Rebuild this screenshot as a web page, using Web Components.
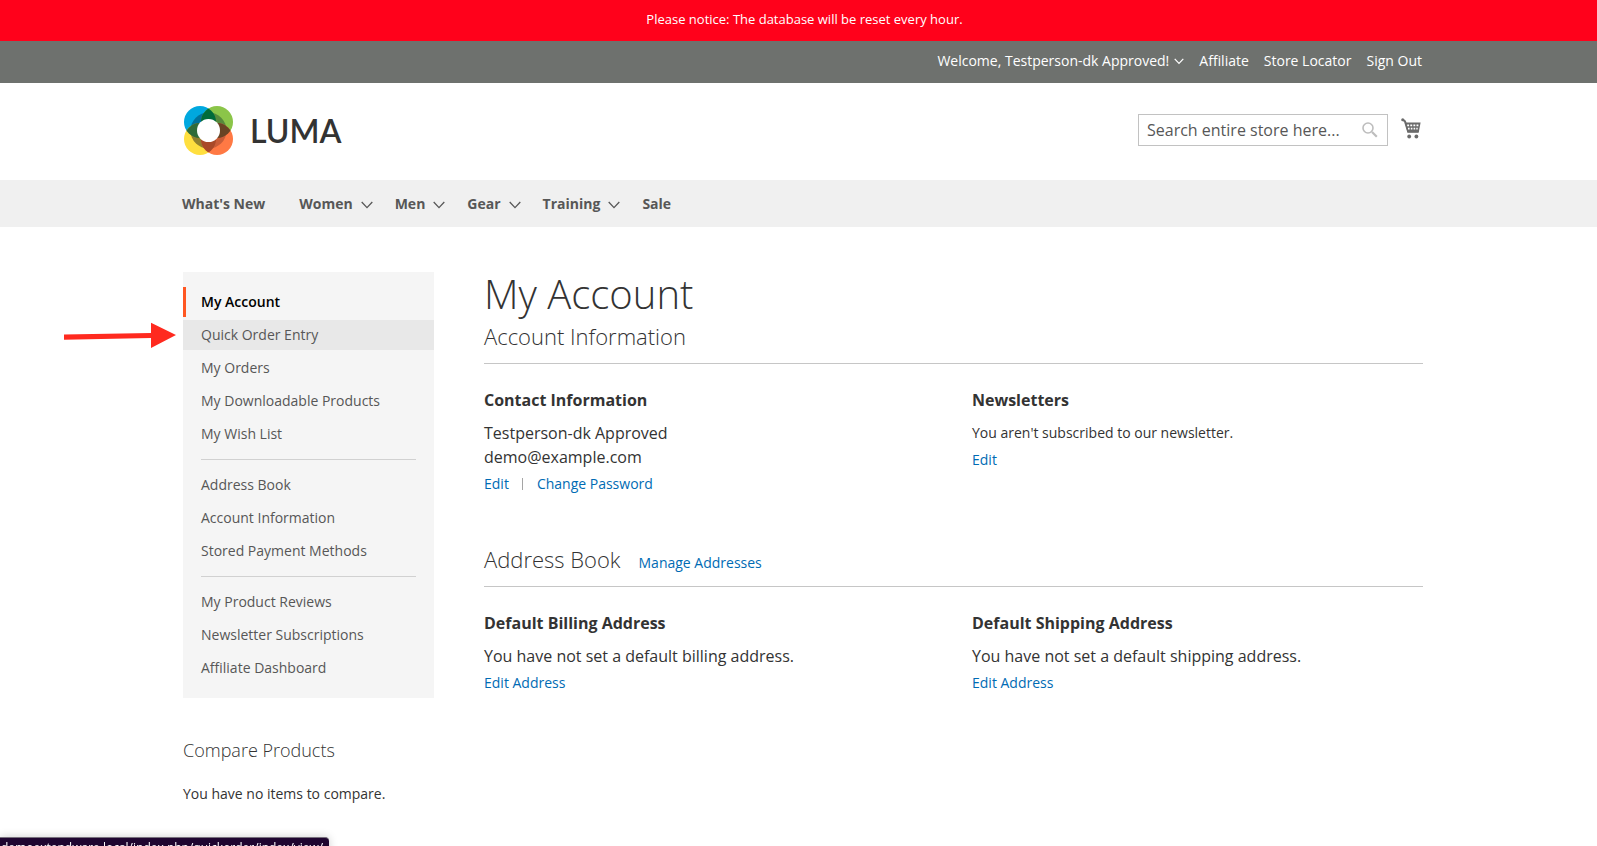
<!DOCTYPE html>
<html lang="en">
<head>
<meta charset="utf-8">
<meta name="viewport" content="width=device-width, initial-scale=1">
<title>My Account</title>
<style>
  body {
    margin: 0;
    background: #fff;
    color: #333;
    font-family: "Open Sans", "Noto Sans", sans-serif;
    font-size: 14px;
    line-height: 20px;
    --container: 1249px;
    --indent: 9px;
    --link: #006bb4;
    --rule: #c6c6c6;
  }
</style>
</head>
<body>
<store-page>
  <store-banner slot="top">Please notice: The database will be reset every hour.</store-banner>
  <store-panel slot="top" customer="Testperson-dk Approved"></store-panel>
  <store-header slot="top"></store-header>
  <store-nav slot="top"></store-nav>

  <account-nav slot="sidebar"></account-nav>
  <compare-box slot="sidebar"></compare-box>

  <page-title>My Account</page-title>
  <account-block heading="Account Information">
    <info-box heading="Contact Information">
      Testperson-dk Approved<br>demo@example.com
      <action-link slot="actions">Edit</action-link>
      <action-link slot="actions" divided>Change Password</action-link>
    </info-box>
    <info-box heading="Newsletters" small>
      You aren't subscribed to our newsletter.
      <action-link slot="actions">Edit</action-link>
    </info-box>
  </account-block>
  <account-block heading="Address Book">
    <action-link slot="title-action">Manage Addresses</action-link>
    <info-box heading="Default Billing Address">
      You have not set a default billing address.
      <action-link slot="actions">Edit Address</action-link>
    </info-box>
    <info-box heading="Default Shipping Address">
      You have not set a default shipping address.
      <action-link slot="actions">Edit Address</action-link>
    </info-box>
  </account-block>
</store-page>
<status-bubble>demoextendware.local/index.php/quickorder/index/view/</status-bubble>

<script>
class StorePage extends HTMLElement {
  constructor() {
    super();
    this.attachShadow({ mode: 'open' });
    this.shadowRoot.innerHTML = `
      <style>
        :host { display: block; }
        .columns {
          box-sizing: border-box;
          display: grid;
          grid-template-columns: 251px minmax(0, 1fr);
          gap: 50px;
          max-width: var(--container);
          margin: 0 auto;
          padding: 45px 0 0 var(--indent);
        }
      </style>
      <header><slot name="top"></slot></header>
      <div class="columns">
        <aside><slot name="sidebar"></slot></aside>
        <main><slot></slot></main>
      </div>
    `;
  }
}

class StoreBanner extends HTMLElement {
  constructor() {
    super();
    this.attachShadow({ mode: 'open' });
    this.shadowRoot.innerHTML = `
      <style>
        :host {
          display: block;
          padding: 9px 0 12px 12px;
          background: #ff011b;
          color: #fff;
          font-size: 13px;
          font-weight: 500;
          text-align: center;
        }
      </style>
      <slot></slot>
    `;
  }
}

class StorePanel extends HTMLElement {
  constructor() {
    super();
    this.attachShadow({ mode: 'open' });
  }

  connectedCallback() {
    this.shadowRoot.innerHTML = `
      <style>
        :host { display: block; background: #6e716e; color: #fff; }
        ul {
          box-sizing: border-box;
          display: flex;
          justify-content: flex-end;
          gap: 15px;
          max-width: var(--container);
          margin: 0 auto;
          padding: 10px 1px 12px 0;
          list-style: none;
        }
        a { color: inherit; text-decoration: none; }
        button {
          display: flex;
          align-items: center;
          gap: 5px;
          padding: 0;
          border: 0;
          background: none;
          color: inherit;
          font: inherit;
          cursor: pointer;
        }
        svg { display: block; }
      </style>
      <ul>
        <li>
          <button type="button">Welcome, ${this.getAttribute('customer')}!
            <svg width="10" height="8" viewBox="0 0 10 8" fill="none" stroke="#fff" stroke-width="1.2"><path d="M.7 1.8 5 6.4l4.3-4.6"/></svg>
          </button>
        </li>
        <li><a href="#">Affiliate</a></li>
        <li><a href="#">Store Locator</a></li>
        <li><a href="#">Sign Out</a></li>
      </ul>
    `;
  }
}

class StoreLogo extends HTMLElement {
  constructor() {
    super();
    this.attachShadow({ mode: 'open' });
    this.shadowRoot.innerHTML = `
      <style>
        :host { display: block; }
        a {
          display: flex;
          align-items: center;
          gap: 17px;
          color: #333;
          font-family: Lato, sans-serif;
          font-size: 32px;
          font-weight: 600;
          line-height: 48px;
          text-decoration: none;
        }
        svg { display: block; }
      </style>
      <a href="#">
        <svg width="49" height="49" viewBox="0 0 49 49" aria-hidden="true">
          <defs>
            <clipPath id="ring"><circle cx="24.5" cy="24.5" r="18"/></clipPath>
            <clipPath id="tl"><circle cx="16" cy="16" r="16"/></clipPath>
            <clipPath id="br"><circle cx="33" cy="33" r="16"/></clipPath>
          </defs>
          <circle cx="16" cy="16" r="16" fill="#00a8df"/>
          <circle cx="33" cy="16" r="16" fill="#8bc549"/>
          <circle cx="16" cy="33" r="16" fill="#ffdf3f"/>
          <circle cx="33" cy="33" r="16" fill="#ff7944"/>
          <g clip-path="url(#ring)">
            <circle cx="16" cy="16" r="16" fill="#00729b"/>
            <circle cx="33" cy="16" r="16" fill="#578a3c"/>
            <circle cx="16" cy="33" r="16" fill="#91812f"/>
            <circle cx="33" cy="33" r="16" fill="#c95d38"/>
          </g>
          <g clip-path="url(#tl)">
            <circle cx="16" cy="33" r="16" fill="#2f6b39"/>
            <circle cx="33" cy="16" r="16" fill="#006b3a"/>
          </g>
          <g clip-path="url(#br)">
            <circle cx="16" cy="33" r="16" fill="#a94a29"/>
            <circle cx="33" cy="16" r="16" fill="#694424"/>
          </g>
          <circle cx="24.5" cy="24.5" r="11.5" fill="#fff"/>
        </svg>
        <span>LUMA</span>
      </a>
    `;
  }
}

class StoreHeader extends HTMLElement {
  constructor() {
    super();
    this.attachShadow({ mode: 'open' });
    this.shadowRoot.innerHTML = `
      <style>
        :host { display: block; }
        .bar {
          box-sizing: border-box;
          display: flex;
          justify-content: space-between;
          align-items: center;
          max-width: var(--container);
          margin: 0 auto;
          padding: 23px 2px 25px 10px;
        }
        .tools { display: flex; align-items: center; gap: 13px; margin-bottom: 2px; }
        form {
          box-sizing: border-box;
          display: flex;
          align-items: center;
          width: 250px;
          height: 32px;
          padding: 0 9px 0 8px;
          border: 1px solid #c2c2c2;
        }
        input {
          flex: 1;
          min-width: 0;
          padding: 0;
          border: 0;
          outline: 0;
          background: none;
          color: #333;
          font: inherit;
          font-size: 16px;
        }
        input::placeholder { color: #575757; opacity: 1; }
        button { padding: 0; border: 0; background: none; cursor: pointer; }
        svg { display: block; }
        .cart { margin-bottom: 3px; }
      </style>
      <div class="bar">
        <store-logo></store-logo>
        <div class="tools">
          <form>
            <input type="text" placeholder="Search entire store here..." aria-label="Search">
            <button type="button" aria-label="Search">
              <svg width="16" height="16" viewBox="0 0 16 16" fill="none" stroke="#bdbdbd"><circle cx="6" cy="6" r="5" stroke-width="1.6"/><path d="m10 10 4.8 4.8" stroke-width="2.2"/></svg>
            </button>
          </form>
          <a class="cart" href="#" aria-label="My Cart">
            <svg width="20" height="21" viewBox="0 0 20 21">
              <circle cx="1.7" cy="1.8" r="1.5" fill="#6b6b6b"/>
              <path d="M1.8 1.6 4 3.4 7.2 13.8h10.4" fill="none" stroke="#6b6b6b" stroke-width="2"/>
              <path d="M3.8 4.6H19.6l-1.8 9.6H6.6z" fill="#6b6b6b"/>
              <path d="M6.2 7.4h1.9M9.3 7.4h1.9M12.4 7.4h1.9M15.5 7.4h1.9M7 10.6h1.6M9.8 10.6h1.6M12.6 10.6h1.6M15.3 10.6h1.4" stroke="#fff" stroke-width="1.7"/>
              <circle cx="8.2" cy="18.5" r="1.9" fill="#6b6b6b"/>
              <circle cx="15.4" cy="18.5" r="1.9" fill="#6b6b6b"/>
            </svg>
          </a>
        </div>
      </div>
    `;
  }
}

class StoreNav extends HTMLElement {
  constructor() {
    super();
    this.attachShadow({ mode: 'open' });
    this._items = [
      { label: "What's New" },
      { label: 'Women', menu: true },
      { label: 'Men', menu: true },
      { label: 'Gear', menu: true },
      { label: 'Training', menu: true },
      { label: 'Sale' },
    ];
  }

  connectedCallback() {
    const chevron = `<svg width="12" height="8" viewBox="0 0 12 8" fill="none" stroke="#575757" stroke-width="1.3"><path d="M.7 1 6 6.6 11.3 1"/></svg>`;

    this.shadowRoot.innerHTML = `
      <style>
        :host { display: block; background: #f0f0f0; }
        ul {
          box-sizing: border-box;
          display: flex;
          max-width: var(--container);
          margin: 0 auto;
          padding: 14px 0 13px 8px;
          list-style: none;
        }
        a {
          display: flex;
          align-items: center;
          gap: 8px;
          color: #575757;
          font-weight: 700;
          text-decoration: none;
        }
        li { margin-right: 34px; }
        li.menu { margin-right: 22px; }
        svg { display: block; margin-top: 2px; }
      </style>
      <nav>
        <ul>
          ${this._items.map((item) => `<li class="${item.menu ? 'menu' : ''}"><a href="#">${item.label}${item.menu ? chevron : ''}</a></li>`).join('')}
        </ul>
      </nav>
    `;
  }
}

class AccountNav extends HTMLElement {
  constructor() {
    super();
    this.attachShadow({ mode: 'open' });
    this._groups = [
      ['My Account', 'Quick Order Entry', 'My Orders', 'My Downloadable Products', 'My Wish List'],
      ['Address Book', 'Account Information', 'Stored Payment Methods'],
      ['My Product Reviews', 'Newsletter Subscriptions', 'Affiliate Dashboard'],
    ];
  }

  connectedCallback() {
    const states = { 'My Account': 'current', 'Quick Order Entry': 'hover' };

    this.shadowRoot.innerHTML = `
      <style>
        :host { display: block; background: #f5f5f5; }
        ul {
          display: flex;
          flex-direction: column;
          gap: 3px;
          margin: 0;
          padding: 15px 0;
          list-style: none;
        }
        li { position: relative; }
        a {
          display: block;
          padding: 5px 18px;
          color: #575757;
          text-decoration: none;
        }
        .current a {
          padding-left: 15px;
          border-left: 3px solid #ff5722;
          color: #000;
          font-weight: 600;
        }
        .hover a { background: #e8e8e8; }
        .divider { height: 1px; margin: 7px 18px; background: #d1d1d1; }
        /* pointer drawn in the page margin, over the empty area */
        .pointer { position: absolute; right: 100%; top: 2px; margin-right: 7px; }
      </style>
      <nav>
        <ul>
          ${this._groups.map((group) => group.map((label) => `
            <li class="${states[label] || ''}">
              <a href="#">${label}</a>
              ${states[label] === 'hover' ? '<svg class="pointer" width="112" height="27" viewBox="0 0 112 27" fill="#ff2a1f" aria-hidden="true"><path d="M0 12.5 87 11V.7L112 13 87 26V16L0 17.7z"/></svg>' : ''}
            </li>`).join('')).join('<li class="divider"></li>')}
        </ul>
      </nav>
    `;
  }
}

class CompareBox extends HTMLElement {
  constructor() {
    super();
    this.attachShadow({ mode: 'open' });
    this.shadowRoot.innerHTML = `
      <style>
        :host { display: block; margin-top: 42px; }
        h2 { margin: 0 0 24px; font-size: 18px; font-weight: 300; line-height: 20px; }
        p { margin: 0; }
      </style>
      <h2>Compare Products</h2>
      <p>You have no items to compare.</p>
    `;
  }
}

class PageTitle extends HTMLElement {
  constructor() {
    super();
    this.attachShadow({ mode: 'open' });
    this.shadowRoot.innerHTML = `
      <style>
        :host { display: block; margin-bottom: 8px; }
        h1 { margin: 0; font-size: 40px; font-weight: 300; line-height: 44px; }
      </style>
      <h1><slot></slot></h1>
    `;
  }
}

class AccountBlock extends HTMLElement {
  constructor() {
    super();
    this.attachShadow({ mode: 'open' });
  }

  connectedCallback() {
    this.shadowRoot.innerHTML = `
      <style>
        :host { display: block; margin-bottom: 53px; }
        .title {
          display: flex;
          align-items: baseline;
          gap: 18px;
          height: 24px;
          margin-bottom: 27px;
          padding-bottom: 15px;
          border-bottom: 1px solid var(--rule);
        }
        h2 { margin: 0; font-size: 22px; font-weight: 300; line-height: 24px; }
        .boxes { display: grid; grid-template-columns: 1fr 1fr; gap: 37px; }
      </style>
      <section>
        <div class="title">
          <h2>${this.getAttribute('heading')}</h2>
          <slot name="title-action"></slot>
        </div>
        <div class="boxes"><slot></slot></div>
      </section>
    `;
  }
}

class InfoBox extends HTMLElement {
  constructor() {
    super();
    this.attachShadow({ mode: 'open' });
  }

  connectedCallback() {
    this.shadowRoot.innerHTML = `
      <style>
        :host { display: block; }
        h3 { margin: 0 0 12px; font-size: 16px; font-weight: 700; line-height: 18px; }
        p { margin: 0 0 5px; font-size: 16px; line-height: 24px; }
        :host([small]) p { font-size: 14px; }
        .actions { display: flex; }
      </style>
      <h3>${this.getAttribute('heading')}</h3>
      <p><slot></slot></p>
      <div class="actions"><slot name="actions"></slot></div>
    `;
  }
}

class ActionLink extends HTMLElement {
  constructor() {
    super();
    this.attachShadow({ mode: 'open' });
    this.shadowRoot.innerHTML = `
      <style>
        :host { display: flex; align-items: center; }
        :host([divided])::before {
          content: '';
          width: 1px;
          height: 12px;
          margin: 0 14px 0 13px;
          background: #a5a5a5;
        }
        a { color: var(--link); text-decoration: none; }
        a:hover { text-decoration: underline; }
      </style>
      <a href="#"><slot></slot></a>
    `;
  }
}

class StatusBubble extends HTMLElement {
  constructor() {
    super();
    this.attachShadow({ mode: 'open' });
    this.shadowRoot.innerHTML = `
      <style>
        /* browser status text, hanging over the lower edge of the window */
        :host {
          position: fixed;
          left: 0;
          bottom: -12px;
          padding: 1px 6px 2px 1px;
          border-top: 1px solid #77707c;
          border-radius: 0 4px 0 0;
          background: #1f0530;
          box-shadow: 0 0 10px rgba(0, 0, 0, 0.2);
          color: #fff;
          font-size: 12px;
          line-height: 17px;
          white-space: nowrap;
        }
      </style>
      <slot></slot>
    `;
  }
}

customElements.define('store-page', StorePage);
customElements.define('store-banner', StoreBanner);
customElements.define('store-panel', StorePanel);
customElements.define('store-logo', StoreLogo);
customElements.define('store-header', StoreHeader);
customElements.define('store-nav', StoreNav);
customElements.define('account-nav', AccountNav);
customElements.define('compare-box', CompareBox);
customElements.define('page-title', PageTitle);
customElements.define('account-block', AccountBlock);
customElements.define('info-box', InfoBox);
customElements.define('action-link', ActionLink);
customElements.define('status-bubble', StatusBubble);
</script>
</body>
</html>
